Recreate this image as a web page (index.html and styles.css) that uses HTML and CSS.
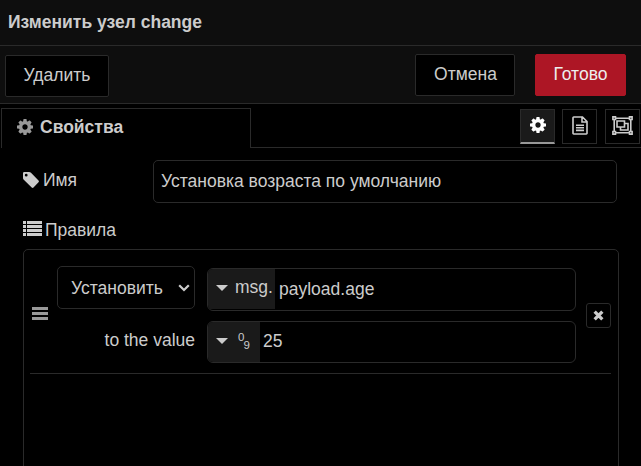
FILE: index.html
```html
<!DOCTYPE html>
<html lang="ru">
<head>
<meta charset="utf-8">
<title>Изменить узел change</title>
<link rel="stylesheet" href="styles.css">
</head>
<body>
<svg class="defs" width="0" height="0">
  <symbol id="cog" viewBox="0 0 1536 1536"><path d="M1024 768q0-106-75-181t-181-75-181 75-75 181 75 181 181 75 181-75 75-181zm512-109v222q0 12-8 23t-20 13l-185 28q-19 54-39 91 35 50 107 138 10 12 10 25t-9 23q-27 37-99 108t-94 71q-12 0-26-9l-138-108q-44 23-91 38-16 136-29 186-7 28-36 28h-222q-14 0-24.5-8.5t-11.5-21.5l-28-184q-49-16-90-37l-141 107q-10 9-25 9-14 0-25-11-126-114-165-168-7-10-7-23 0-12 8-23 15-21 51-66.5t54-70.5q-27-50-41-99l-183-27q-13-2-21-12.5t-8-23.5v-222q0-12 8-23t19-13l186-28q14-46 39-92-40-57-107-138-10-12-10-24 0-10 9-23 26-36 98.5-107.5t94.5-71.5q13 0 26 10l138 107q44-23 91-38 16-136 29-186 7-28 36-28h222q14 0 24.5 8.5t11.5 21.5l28 184q49 16 90 37l142-107q9-9 24-9 13 0 25 10 129 119 165 170 7 8 7 22 0 12-8 23-15 21-51 66.5t-54 70.5q26 50 41 98l183 28q13 2 21 12.5t8 23.5z"/></symbol>
</svg>
<header class="title">Изменить узел change</header>
<div class="toolbar">
  <button class="btn delete">Удалить</button>
  <button class="btn cancel">Отмена</button>
  <button class="btn done">Готово</button>
</div>
<nav class="tabs">
  <div class="tab"><svg width="16" height="16"><use href="#cog"/></svg><span>Свойства</span></div>
  <div class="tab-tools">
    <button class="tool active"><svg width="16" height="16"><use href="#cog"/></svg></button>
    <button class="tool">
      <svg class="line" width="16" height="19" viewBox="0 0 16 19"><path d="M1.7 1h8.8L15 5.5v11.8a.7.7 0 0 1-.7.7H1.7a.7.7 0 0 1-.7-.7V1.7a.7.7 0 0 1 .7-.7zM10 1v5h5M4 9.200h8M4 11.800h8M4 14.400h8"/></svg>
    </button>
    <button class="tool">
      <svg class="line" width="21" height="19" viewBox="0 0 21 19"><path d="M3.500 2.200h14M3.500 16.800h14M2.200 3.500v12M18.800 3.500v12M5 5h7.500v6H5zM12.500 7.500H16V14H8.500v-3"/><path d="M.9.9h2.600v2.600H.9zM17.500.9h2.600v2.600h-2.600zM.9 15.500h2.600v2.600H.9zM17.500 15.500h2.600v2.600h-2.600z"/></svg>
    </button>
  </div>
</nav>
<main class="form">
  <div class="row">
    <label class="label"><svg width="16" height="16" viewBox="0 0 16 16"><path fill-rule="evenodd" d="M0 1.300Q0 0 1.300 0H6q1.200 0 2 .8l7.500 7.600q.9.9 0 1.900L10.500 15.500q-.9.800-1.800 0L.8 7.800Q0 7 0 6zM3.200 1.800a1.400 1.400 0 1 0 0 2.800 1.400 1.400 0 0 0 0-2.800z"/></svg><span>Имя</span></label>
    <div class="input">Установка возраста по умолчанию</div>
  </div>
  <label class="label rules-label"><svg width="19" height="15" viewBox="0 0 19 15"><path d="M0 0h3v3H0zM4 0h15v3H4zM0 4h3v3H0zM4 4h15v3H4zM0 8h3v3H0zM4 8h15v3H4zM0 12h3v3H0zM4 12h15v3H4z"/></svg><span>Правила</span></label>
  <section class="rules">
    <div class="rule">
      <div class="handle"><i></i><i></i><i></i></div>
      <div class="action">
        <div class="select"><span>Установить</span><svg class="chevron" width="12" height="8" viewBox="0 0 12 8"><path d="M1.200 1.200 6 6l4.800-4.800"/></svg></div>
        <div class="to">to the value</div>
      </div>
      <div class="values">
        <div class="typed"><div class="type"><i class="caret"></i><span class="msg">msg.</span></div><span class="value property">payload.age</span></div>
        <div class="typed number"><div class="type"><i class="caret"></i><span class="digits"><sup>0</sup><sub>9</sub></span></div><span class="value">25</span></div>
      </div>
      <button class="remove"><svg width="11" height="11" viewBox="0 0 10 10"><path d="M1.500 1.500l7 7M8.500 1.500l-7 7"/></svg></button>
    </div>
  </section>
</main>
</body>
</html>
```
FILE: styles.css
```css
* { box-sizing: border-box; }
body {
  margin: 0;
  height: 466px;
  overflow: hidden;
  display: flex;
  flex-direction: column;
  background: #000;
  color: #ccc;
  font: 17.5px/25px "Liberation Sans", Arial, sans-serif;
}
svg { display: block; flex: none; fill: currentColor; }
.defs { position: absolute; }
button { font: inherit; color: inherit; padding: 0; background: #000; border: 1px solid #2a2a2a; }

.title {
  height: 46px;
  flex: none;
  padding: 10px 8px;
  background: #0e0e0e;
  border-bottom: 1px solid #2a2a2a;
  font-weight: bold;
}
.toolbar {
  display: flex;
  height: 58px;
  flex: none;
  padding: 8px 15px 0 5px;
  background: #0e0e0e;
  border-bottom: 1px solid #2a2a2a;
}
.btn { height: 42px; padding-bottom: 2px; border-radius: 2px; }
.delete { width: 104px; margin-top: 1px; }
.cancel { width: 100px; margin-left: auto; padding-left: 1px; }
.done { width: 91px; margin-left: 20px; background: #ad1625; border-color: #ad1625; color: #eee; }

.tabs { display: flex; height: 44px; flex: none; }
.tab {
  display: flex;
  gap: 7px;
  width: 250px;
  margin: 4px 0 0 1px;
  padding: 6px 0 0 15px;
  border: 1px solid #2a2a2a;
  border-bottom: 0;
  font-weight: bold;
}
.tab svg { margin-top: 4px; color: #999; }
.tab-tools {
  flex: 1;
  display: flex;
  justify-content: flex-end;
  gap: 7px;
  padding: 5px 1px 0 0;
  border-bottom: 1px solid #2a2a2a;
}
.tool { width: 35px; height: 35px; padding-bottom: 2px; display: grid; place-items: center; }
.tool:last-child { margin-left: 1px; }
.tool.active { background: #1a1a1a; border-bottom: 2px solid #999; color: #fff; }
.line { fill: none; stroke: currentColor; stroke-width: 1.6; }

.form { padding: 12px 22px 0 23px; }
.row { display: flex; }
.label { display: flex; gap: 4px; }
.row .label { width: 130px; padding-top: 8px; gap: 4px; }
.row .label svg { margin-top: 4px; }
.input {
  width: 464px;
  height: 43px;
  padding: 8px 7px;
  border: 1px solid #2a2a2a;
  border-radius: 5px;
}
.rules-label { gap: 3px; height: 25px; margin-top: 15px; }
.rules-label svg { margin-top: 3px; }
.rules {
  height: 230px;
  margin-top: 6px;
  padding: 0 7px 0 6px;
  border: 1px solid #2a2a2a;
  border-radius: 5px 5px 0 0;
}
.rule {
  display: flex;
  height: 124px;
  border-bottom: 1px solid #2a2a2a;
}
.handle { width: 16px; margin: 57px 9px 0 2px; }
.handle i { display: block; height: 3px; margin-bottom: 2px; background: #999; }
.action { width: 138px; padding-top: 16px; }
.select {
  display: flex;
  justify-content: space-between;
  height: 43px;
  padding: 9px 4px 0 13px;
  border: 1px solid #2a2a2a;
  border-radius: 5px;
}
.chevron { margin-top: 8px; fill: none; stroke: currentColor; stroke-width: 2.2; }
.to { margin-top: 19px; text-align: right; }
.values { width: 369px; margin-left: 12px; padding-top: 18px; }
.typed {
  display: flex;
  height: 43px;
  border: 1px solid #2a2a2a;
  border-radius: 6px;
  overflow: hidden;
}
.typed.number { height: 42px; margin-top: 10px; }
.type { display: flex; width: 67px; height: 40px; padding-left: 8px; background: #1a1a1a; }
.number .type { width: 52px; }
.caret {
  width: 12px;
  height: 6px;
  margin-top: 16px;
  background: currentColor;
  clip-path: polygon(0 0, 100% 0, 50% 100%);
}
.msg { margin: 6px 0 0 7px; }
.value { margin: 7px 0 0 3px; }
.property { margin: 8px 0 0 4px; }
.digits { display: flex; margin-left: 10px; font-size: 11.5px; line-height: 12px; }
.digits sup, .digits sub { font-size: inherit; vertical-align: baseline; }
.digits sup { margin-top: 9px; }
.digits sub { margin: 17px 0 0 -1px; }
.remove {
  display: grid;
  place-items: center;
  width: 25px;
  height: 25px;
  margin: 53px 0 0 10px;
  padding-bottom: 1px;
  border-radius: 3px;
}
.remove path { stroke: currentColor; stroke-width: 3; }
```
